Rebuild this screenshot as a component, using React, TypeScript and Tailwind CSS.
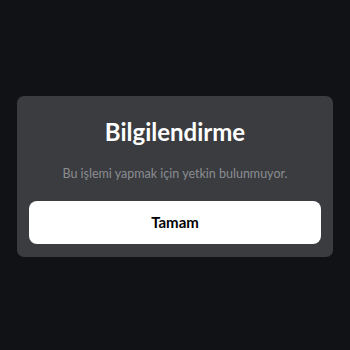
export default function App() {
  return (
    <div className="w-[350px] h-[350px] bg-[#101215] pt-[96px] px-[17px]" style={{ fontFamily: 'Lato, "Noto Sans", sans-serif' }}>
      <div className="bg-[#3a3c40] rounded-[7px] px-[12px] pt-[20px] pb-[13px] flex flex-col items-center">
        <h1 className="text-[24px] leading-[32px] font-bold text-white">Bilgilendirme</h1>
        <p className="mt-[17px] text-[12.5px] leading-[18px] text-[#8b8d91]">Bu işlemi yapmak için yetkin bulunmuyor.</p>
        <button className="mt-[18px] w-full h-[43px] bg-white rounded-[8px] text-[15px] font-bold text-black">
          Tamam
        </button>
      </div>
    </div>
  );
}
